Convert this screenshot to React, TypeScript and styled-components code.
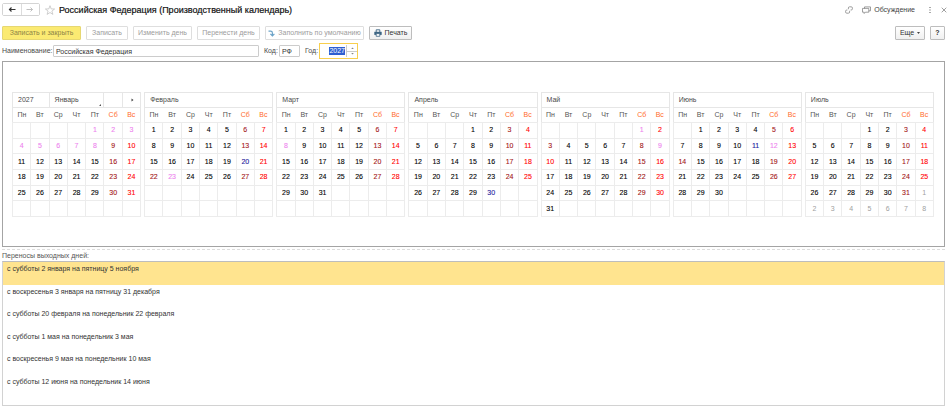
import React, { useState } from "react";
import styled, { createGlobalStyle } from "styled-components";

const GlobalStyle = createGlobalStyle`
  *, *::before, *::after { box-sizing: border-box; }
  body { margin: 0; background: #fff; }
  body, button, input { font-family: "Liberation Sans", Arial, sans-serif; font-size: 7px; line-height: 8px; color: #4a4a4a; }
  button { cursor: pointer; }
`;

const Page = styled.main`
  padding: 3px 5px 4px 2px;
`;

const TitleBar = styled.header`
  display: flex;
  align-items: center;
  height: 13px;
  margin-right: -2px;
`;

const NavGroup = styled.nav`
  display: flex;
  height: 13px;
  width: 38px;
  border: 1px solid #d4d4d4;
  border-radius: 2px;
`;

const NavButton = styled.button<{ $muted?: boolean }>`
  flex: 1;
  display: flex;
  align-items: center;
  justify-content: center;
  padding: 0;
  border: 0;
  background: #fff;
  color: ${(p) => (p.$muted ? "#b8b8b8" : "#333")};
  & + & { border-left: 1px solid #dcdcdc; }
`;

const IconButton = styled.button<{ $color?: string }>`
  display: flex;
  align-items: center;
  gap: 3px;
  padding: 0;
  border: 0;
  background: none;
  color: ${(p) => p.$color ?? "#444"};
`;

const Title = styled.h1`
  flex: 1;
  margin: 0 0 0 4px;
  font-size: 9px;
  line-height: 12px;
  font-weight: 400;
  color: #111;
  -webkit-text-stroke: 0.2px #111;
`;

const StarSlot = styled.div`
  display: flex;
  margin-left: 5px;
`;

const WindowTools = styled.div`
  display: flex;
  align-items: center;
  gap: 9px;
`;

const Toolbar = styled.div`
  display: flex;
  gap: 5px;
  height: 14px;
  margin-top: 10px;
`;

const ToolButton = styled.button<{ $kind?: "primary" | "muted"; $width: number }>`
  display: flex;
  align-items: center;
  justify-content: center;
  gap: 3px;
  width: ${(p) => p.$width}px;
  padding: 0;
  white-space: nowrap;
  border: 1px solid ${(p) => (p.$kind === "primary" ? "#e6d772" : p.$kind === "muted" ? "#dedede" : "#bdbdbd")};
  border-radius: 1px;
  background: ${(p) => (p.$kind === "primary" ? "#fbea72" : p.$kind === "muted" ? "#fff" : "linear-gradient(#fff, #f0f0f0)")};
  color: ${(p) => (p.$kind === "primary" ? "#8e8546" : p.$kind === "muted" ? "#9c9c9c" : "#333")};
`;

const Spacer = styled.div`
  flex: 1;
`;

const Fields = styled.form`
  display: flex;
  align-items: center;
  height: 16px;
  margin-top: 3px;
`;

const FieldLabel = styled.label<{ $width: number }>`
  width: ${(p) => p.$width}px;
  white-space: nowrap;
`;

const TextInput = styled.input<{ $width: number }>`
  width: ${(p) => p.$width}px;
  height: 12px;
  margin-right: 5px;
  padding: 0 2px;
  border: 1px solid #ccc;
  border-radius: 1px;
  color: #333;
`;

const YearBox = styled.div`
  display: flex;
  align-items: center;
  justify-content: flex-end;
  width: 39px;
  height: 16px;
  border: 1px solid #f8cf4e;
  background: #fff;
`;

const YearInput = styled.input`
  width: 16px;
  height: 8px;
  padding: 0;
  border: 0;
  outline: 0;
  text-align: right;
  background: #2f5fd0;
  color: #fff;
`;

const SpinButtons = styled.div`
  display: flex;
  flex-direction: column;
  width: 11px;
  height: 12px;
  margin-left: 1px;
  border-left: 1px solid #ccc;
`;

const SpinButton = styled.button`
  flex: 1;
  display: flex;
  align-items: center;
  justify-content: center;
  padding: 0;
  border: 0;
  background: none;
  & + & { border-top: 1px solid #ccc; }
`;

const CalendarPanel = styled.section`
  margin-top: 2px;
  padding: 30px 10px 29px 9px;
  border: 1px solid #a4a4a4;
`;

const Months = styled.div`
  display: grid;
  grid-template-columns: repeat(7, 1fr);
  gap: 3px;
`;

const MonthTable = styled.table`
  width: 100%;
  height: 125px;
  table-layout: fixed;
  border-collapse: collapse;
  border: 1px solid #e6e6e6;
  tr { height: 15px; }
`;

const HeadCell = styled.th`
  padding: 0 0 0 5px;
  text-align: left;
  font-weight: 400;
  border: 1px solid #e6e6e6;
`;

const MonthPicker = styled.button`
  display: flex;
  align-items: center;
  justify-content: space-between;
  width: 100%;
  padding: 0 2px 0 0;
  border: 0;
  background: none;
  svg { align-self: flex-end; margin-bottom: -2px; }
`;

const NextMonth = styled.button`
  display: flex;
  align-items: center;
  justify-content: center;
  width: 100%;
  padding: 0 3px 0 0;
  border: 0;
  background: none;
`;

const WeekCell = styled.th<{ $weekend: boolean }>`
  padding: 0;
  font-weight: 400;
  color: ${(p) => (p.$weekend ? "#ff6a2b" : "#555")};
`;

type Kind = "work" | "sat" | "sun" | "holiday" | "short" | "next";

const dayColors: Record<Kind, string> = {
  work: "#000",
  sat: "#a31515",
  sun: "#ff0000",
  holiday: "#ee82ee",
  short: "#1a1a9c",
  next: "#a0a0a0",
};

const DayCell = styled.td<{ $kind: Kind }>`
  padding: 0;
  text-align: center;
  border: 1px solid #ececec;
  color: ${(p) => dayColors[p.$kind]};
  -webkit-text-stroke: ${(p) => (p.$kind === "next" ? "0" : "0.1px")};
`;

const ListSection = styled.section`
  margin-top: 2px;
  border-top: 1px dashed #ddd;
`;

const ListTitle = styled.h2`
  margin: 2px 0 1px;
  font-size: 7px;
  line-height: 8px;
  font-weight: 400;
  color: #555;
`;

const ListBox = styled.div`
  min-height: 145px;
  border: 1px solid #d2d2d2;
  border-top-color: #bdbdbd;
`;

const TransferList = styled.ul`
  display: grid;
  grid-auto-rows: 1fr;
  height: 135px;
  margin: 0;
  padding: 0;
  list-style: none;
`;

const Transfer = styled.li<{ $selected: boolean }>`
  padding: 3px 4px;
  color: #333;
  background: ${(p) => (p.$selected ? "#ffe48f" : "transparent")};
  cursor: default;
`;

const weekDays = ["Пн", "Вт", "Ср", "Чт", "Пт", "Сб", "Вс"];

interface MonthData {
  name: string;
  offset: number;
  days: number;
  special?: Record<number, Kind>;
  trailing?: number;
}

const months: MonthData[] = [
  {
    name: "Январь", offset: 4, days: 31,
    special: { 1: "holiday", 2: "holiday", 3: "holiday", 4: "holiday", 5: "holiday", 6: "holiday", 7: "holiday", 8: "holiday" },
  },
  { name: "Февраль", offset: 0, days: 28, special: { 20: "short", 22: "sat", 23: "holiday" } },
  { name: "Март", offset: 0, days: 31, special: { 8: "holiday" } },
  { name: "Апрель", offset: 3, days: 30, special: { 30: "short" } },
  { name: "Май", offset: 5, days: 31, special: { 1: "holiday", 3: "sat", 9: "holiday", 10: "sun" } },
  { name: "Июнь", offset: 1, days: 30, special: { 11: "short", 12: "holiday", 14: "sat" } },
  { name: "Июль", offset: 3, days: 31, trailing: 8 },
];

const transfers = [
  "с субботы 2 января на пятницу 5 ноября",
  "с воскресенья 3 января на пятницу 31 декабря",
  "с субботы 20 февраля на понедельник 22 февраля",
  "с субботы 1 мая на понедельник 3 мая",
  "с воскресенья 9 мая на понедельник 10 мая",
  "с субботы 12 июня на понедельник 14 июня",
];

function cellAt(month: MonthData, index: number): { label: string; kind: Kind } {
  const day = index - month.offset + 1;
  if (day < 1) return { label: "", kind: "work" };
  if (day > month.days) {
    const next = day - month.days;
    return { label: next <= (month.trailing ?? 0) ? String(next) : "", kind: "next" };
  }
  const column = index % 7;
  const usual: Kind = column === 5 ? "sat" : column === 6 ? "sun" : "work";
  return { label: String(day), kind: month.special?.[day] ?? usual };
}

function Arrow({ back }: { back?: boolean }) {
  return (
    <svg width="8" height="7" viewBox="0 0 8 7" fill="none" stroke="currentColor" strokeWidth={back ? 1.2 : 0.9}>
      <path d={back ? "M7.5 3.5H1.5M3.5 1.5L1.5 3.5L3.5 5.5" : "M.5 3.5H6.5M4.5 1.5L6.5 3.5L4.5 5.5"} />
    </svg>
  );
}

function SpinArrow({ down }: { down?: boolean }) {
  return (
    <svg width="3" height="2" viewBox="0 0 3 2" fill="#888">
      <path d={down ? "M.2 0H2.8L1.5 1.6Z" : "M.2 2H2.8L1.5 .4Z"} />
    </svg>
  );
}

function Month({ month, year, first }: { month: MonthData; year: number; first: boolean }) {
  return (
    <MonthTable aria-label={`${month.name} ${year}`}>
      <colgroup>
        {weekDays.map((name) => <col key={name} />)}
      </colgroup>
      <thead>
        <tr>
          {first ? (
            <>
              <HeadCell colSpan={2}>{year}</HeadCell>
              <HeadCell colSpan={3}>
                <MonthPicker type="button">
                  {month.name}
                  <svg width="2" height="2" viewBox="0 0 2 2" fill="#555"><path d="M2 0V2H0Z" /></svg>
                </MonthPicker>
              </HeadCell>
              <HeadCell />
              <HeadCell>
                <NextMonth type="button" aria-label="Следующий месяц">
                  <svg width="3" height="4" viewBox="0 0 3 4" fill="#444"><path d="M.5 .5L2.5 2L.5 3.5Z" /></svg>
                </NextMonth>
              </HeadCell>
            </>
          ) : (
            <HeadCell colSpan={7}>{month.name}</HeadCell>
          )}
        </tr>
        <tr>
          {weekDays.map((name, i) => (
            <WeekCell key={name} $weekend={i > 4}>{name}</WeekCell>
          ))}
        </tr>
      </thead>
      <tbody>
        {[0, 1, 2, 3, 4, 5].map((week) => (
          <tr key={week}>
            {weekDays.map((name, i) => {
              const cell = cellAt(month, week * 7 + i);
              return <DayCell key={name} $kind={cell.kind}>{cell.label}</DayCell>;
            })}
          </tr>
        ))}
      </tbody>
    </MonthTable>
  );
}

export default function App() {
  const [selected, setSelected] = useState(0);
  const [year, setYear] = useState(2027);

  return (
    <>
      <GlobalStyle />
      <Page>
        <TitleBar>
          <NavGroup>
            <NavButton type="button" aria-label="Назад"><Arrow back /></NavButton>
            <NavButton type="button" aria-label="Вперед" $muted><Arrow /></NavButton>
          </NavGroup>
          <StarSlot>
            <IconButton type="button" aria-label="В избранное" $color="#bbb">
              <svg width="10" height="10" viewBox="0 0 10 10" fill="none" stroke="currentColor" strokeWidth=".7">
                <path d="M5 .7L6.2 3.9L9.6 4L6.9 6.1L7.9 9.4L5 7.5L2.1 9.4L3.1 6.1L.4 4L3.8 3.9Z" />
              </svg>
            </IconButton>
          </StarSlot>
          <Title>Российская Федерация (Производственный календарь)</Title>
          <WindowTools>
            <IconButton type="button" aria-label="Ссылка" $color="#888">
              <svg width="8" height="8" viewBox="0 0 8 8" fill="none" stroke="currentColor" strokeWidth=".8">
                <path d="M3.4 3.2V2Q3.4 .8 4.6 .8H6.2Q7.4 .8 7.4 2V2.8Q7.4 4 6.2 4H5.6M4.6 4.8V6Q4.6 7.2 3.4 7.2H1.8Q.6 7.2 .6 6V5.2Q.6 4 1.8 4H2.4" />
              </svg>
            </IconButton>
            <IconButton type="button">
              <svg width="9" height="8" viewBox="0 0 9 8" fill="#fff" stroke="#777" strokeWidth=".7">
                <path d="M2.5 .9H8.5V4.8H2.5Z" />
                <path d="M.5 2.4H6.8V6.2H3.4L2.2 7.5V6.2H.5Z" />
              </svg>
              Обсуждение
            </IconButton>
            <IconButton type="button" aria-label="Меню">
              <svg width="8" height="8" viewBox="0 0 8 8" fill="#555">
                <path d="M5.5 1H6.5V2H5.5ZM5.5 3.5H6.5V4.5H5.5ZM5.5 6H6.5V7H5.5Z" />
              </svg>
            </IconButton>
            <IconButton type="button" aria-label="Закрыть">
              <svg width="6" height="6" viewBox="0 0 6 6" fill="none" stroke="#888" strokeWidth=".8">
                <path d="M.7 .7L5.3 5.3M5.3 .7L.7 5.3" />
              </svg>
            </IconButton>
          </WindowTools>
        </TitleBar>

        <Toolbar>
          <ToolButton type="button" $kind="primary" $width={79}>Записать и закрыть</ToolButton>
          <ToolButton type="button" $kind="muted" $width={42}>Записать</ToolButton>
          <ToolButton type="button" $kind="muted" $width={59}>Изменить день</ToolButton>
          <ToolButton type="button" $kind="muted" $width={63}>Перенести день</ToolButton>
          <ToolButton type="button" $kind="muted" $width={99}>
            <svg width="7" height="7" viewBox="0 0 7 7" fill="none" stroke="#6ba3c8" strokeWidth="1.2">
              <path d="M.5 1.2H2.6Q4.4 1.2 4.4 3V5.5M2.4 3.8L4.4 5.9L6.4 3.8" />
            </svg>
            Заполнить по умолчанию
          </ToolButton>
          <ToolButton type="button" $width={43}>
            <svg width="8" height="8" viewBox="0 0 8 8" fill="none" stroke="#3d6583">
              <path d="M2.2 3V.8H5.8V3" strokeWidth=".9" />
              <path d="M.3 2.8H7.7V5.9H.3Z" fill="#3d6583" stroke="none" />
              <path d="M2.2 4.6H5.8V7.3H2.2Z" fill="#fff" strokeWidth=".8" />
            </svg>
            Печать
          </ToolButton>
          <Spacer />
          <ToolButton type="button" $width={30}>
            Еще
            <svg width="3" height="2" viewBox="0 0 3 2" fill="#444"><path d="M0 0H3L1.5 2Z" /></svg>
          </ToolButton>
          <ToolButton type="button" $width={15}><b>?</b></ToolButton>
        </Toolbar>

        <Fields>
          <FieldLabel htmlFor="name" $width={51}>Наименование:</FieldLabel>
          <TextInput id="name" $width={206} defaultValue="Российская Федерация" />
          <FieldLabel htmlFor="code" $width={15}>Код:</FieldLabel>
          <TextInput id="code" $width={21} defaultValue="РФ" />
          <FieldLabel htmlFor="year" $width={14}>Год:</FieldLabel>
          <YearBox>
            <YearInput id="year" inputMode="numeric" value={year} onChange={(e) => setYear(Number(e.target.value) || 0)} />
            <SpinButtons>
              <SpinButton type="button" aria-label="Больше" onClick={() => setYear(year + 1)}><SpinArrow /></SpinButton>
              <SpinButton type="button" aria-label="Меньше" onClick={() => setYear(year - 1)}><SpinArrow down /></SpinButton>
            </SpinButtons>
          </YearBox>
        </Fields>

        <CalendarPanel>
          <Months>
            {months.map((month, i) => (
              <Month key={month.name} month={month} year={year} first={i === 0} />
            ))}
          </Months>
        </CalendarPanel>

        <ListSection>
          <ListTitle id="transfers">Переносы выходных дней:</ListTitle>
          <ListBox>
            <TransferList role="listbox" aria-labelledby="transfers">
              {transfers.map((text, i) => (
                <Transfer key={text} role="option" aria-selected={i === selected} $selected={i === selected} onClick={() => setSelected(i)}>
                  {text}
                </Transfer>
              ))}
            </TransferList>
          </ListBox>
        </ListSection>
      </Page>
    </>
  );
}
